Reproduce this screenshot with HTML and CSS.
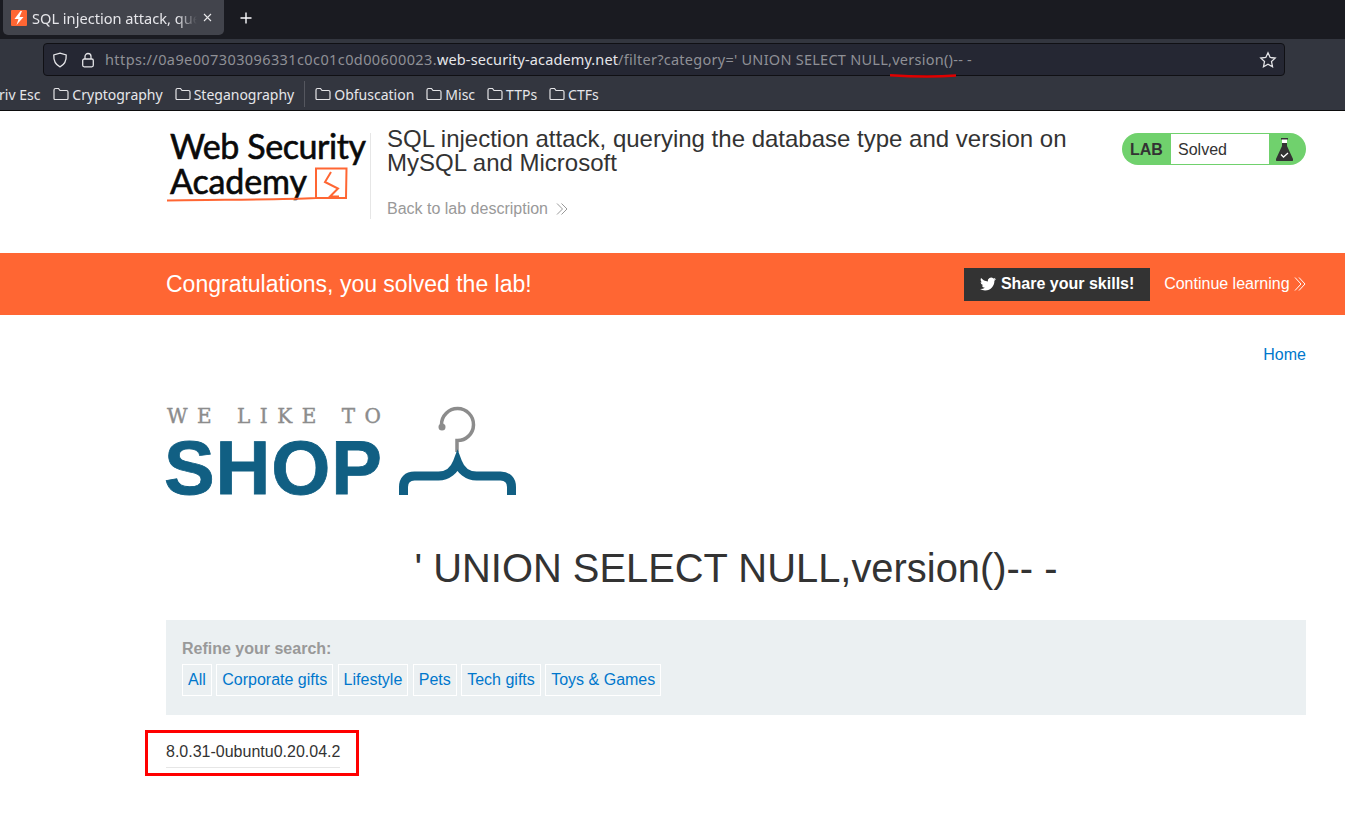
FILE: index.html
```html
<!DOCTYPE html>
<html lang="en">
<head>
  <meta charset="UTF-8">
  <title>SQL injection attack, querying the database type and version on MySQL and Microsoft</title>
  <link rel="stylesheet" href="styles.css">
</head>
<body>

  <div class="browser">
    <div class="tabbar">
      <div class="tab">
        <svg class="favicon" width="16" height="16" viewBox="0 0 16 16"><rect width="16" height="16" rx="1" fill="#ff6633"/><path d="M9.500 1 3.500 9h4L5.500 15l7-8H8.500L11 1z" fill="#fff"/></svg>
        <span class="tab-title">SQL injection attack, querying</span>
        <svg class="tab-close" width="9" height="9" viewBox="0 0 9 9"><path d="M1 1l7 7M8 1l-7 7" stroke="#e8e8ea" stroke-width="1.100"/></svg>
      </div>
      <svg class="newtab" width="14" height="14" viewBox="0 0 14 14"><path d="M7 1.500v11M1.500 7h11" stroke="#fbfbfe" stroke-width="1.400"/></svg>
    </div>

    <div class="navbar">
      <div class="urlbar">
        <svg width="16" height="16" viewBox="0 0 16 16" fill="none" stroke="#e4e4e7" stroke-width="1.300"><path d="M8 1.200 14.200 3c.3 5.500-1.600 9.600-6.200 11.800C3.400 12.600 1.500 8.500 1.800 3z"/></svg>
        <svg class="lock" width="16" height="16" viewBox="0 0 16 16" fill="none" stroke="#e4e4e7" stroke-width="1.300"><rect x="2.700" y="7" width="10.600" height="7.800" rx="1.500"/><path d="M5 7V4.500a3 3 0 0 1 6 0V7"/></svg>
        <span class="url"><span class="url-dim url-scheme">https://0a9e007303096331c0c01c0d00600023.</span><span class="url-host">web-security-academy.net</span><span class="url-dim url-path">/filter?category=' UNION SELECT NULL,version()-- -</span></span>
        <svg class="star" width="18" height="18" viewBox="0 0 18 18" fill="none" stroke="#e4e4e7" stroke-width="1.300"><path d="M9 1.800l2.200 4.700 5 .6-3.700 3.500 1 5.100L9 13.200l-4.500 2.500 1-5.100L1.800 7.100l5-.6z"/></svg>
      </div>
      <svg class="scribble" width="66" height="4" viewBox="0 0 66 4"><path d="M0 1.200C20 2.500 45 3 66 1.500" stroke="#e00000" stroke-width="2.400" fill="none"/></svg>
    </div>

    <div class="bookmarks">
      <span class="bookmark bookmark-cut">riv Esc</span>
      <span class="bookmark"><svg class="folder" width="16" height="14" viewBox="0 0 16 14"><path d="M1 3a1.500 1.500 0 0 1 1.500-1.500h3L7 3.500h6.500A1.500 1.500 0 0 1 15 5v6.500a1 1 0 0 1-1 1H2a1 1 0 0 1-1-1z"/></svg>Cryptography</span>
      <span class="bookmark"><svg class="folder" width="16" height="14" viewBox="0 0 16 14"><path d="M1 3a1.500 1.500 0 0 1 1.500-1.500h3L7 3.500h6.500A1.500 1.500 0 0 1 15 5v6.500a1 1 0 0 1-1 1H2a1 1 0 0 1-1-1z"/></svg>Steganography</span>
      <span class="bookmark-sep"></span>
      <span class="bookmark"><svg class="folder" width="16" height="14" viewBox="0 0 16 14"><path d="M1 3a1.500 1.500 0 0 1 1.500-1.500h3L7 3.500h6.500A1.500 1.500 0 0 1 15 5v6.500a1 1 0 0 1-1 1H2a1 1 0 0 1-1-1z"/></svg>Obfuscation</span>
      <span class="bookmark"><svg class="folder" width="16" height="14" viewBox="0 0 16 14"><path d="M1 3a1.500 1.500 0 0 1 1.500-1.500h3L7 3.500h6.500A1.500 1.500 0 0 1 15 5v6.500a1 1 0 0 1-1 1H2a1 1 0 0 1-1-1z"/></svg>Misc</span>
      <span class="bookmark"><svg class="folder" width="16" height="14" viewBox="0 0 16 14"><path d="M1 3a1.500 1.500 0 0 1 1.500-1.500h3L7 3.500h6.500A1.500 1.500 0 0 1 15 5v6.500a1 1 0 0 1-1 1H2a1 1 0 0 1-1-1z"/></svg>TTPs</span>
      <span class="bookmark"><svg class="folder" width="16" height="14" viewBox="0 0 16 14"><path d="M1 3a1.500 1.500 0 0 1 1.500-1.500h3L7 3.500h6.500A1.500 1.500 0 0 1 15 5v6.500a1 1 0 0 1-1 1H2a1 1 0 0 1-1-1z"/></svg>CTFs</span>
    </div>
  </div>

  <header class="lab-header">
    <svg class="academy-logo" width="204" height="80" viewBox="0 0 204 80">
      <text x="4" y="32" class="academy-text" textLength="196">Web Security</text>
      <text x="4" y="67" class="academy-text" textLength="137">Academy</text>
      <path d="M1 73.500C50 72.500 110 73 150 71V41.500h30.500L180 71h-30" fill="none" stroke="#ff6633" stroke-width="2"/>
      <path d="M165 45l-6 10 13 6.500-8 8h9" fill="none" stroke="#ff6633" stroke-width="2"/>
    </svg>
    <span class="title-rule"></span>
    <div class="lab-title">
      <h2>SQL injection attack, querying the database type and version on MySQL and Microsoft</h2>
      <a class="back-link">Back to lab description
        <svg width="12" height="12" viewBox="0 0 12 12" fill="none" stroke="#999" stroke-width="1"><path d="M1 .5 6.500 6 1 11.500M5.500 .5 11 6l-5.500 5.500"/></svg>
      </a>
    </div>
    <div class="lab-status">
      <span class="lab-word">LAB</span>
      <span class="lab-solved">Solved</span>
      <span class="lab-flask">
        <svg width="17" height="23" viewBox="0 0 17 23"><path d="M5 0h7v1.500h-1V8l6 13a1.500 1.500 0 0 1-1.300 2H1.300A1.500 1.500 0 0 1 0 21L6 8V1.500H5z" fill="#333"/><path d="M6 1.500h5V5H6z" fill="#fff"/><path d="M5 16.500l2.500 2.500 4.500-4" fill="none" stroke="#fff" stroke-width="1.300"/></svg>
      </span>
    </div>
  </header>

  <section class="solved-banner">
    <h4>Congratulations, you solved the lab!</h4>
    <a class="share-btn">
      <svg width="16" height="16" viewBox="0 0 24 24" fill="#fff"><path d="M23.953 4.570a10 10 0 01-2.825.775 4.958 4.958 0 002.163-2.723c-.951.555-2.005.959-3.127 1.184a4.920 4.920 0 00-8.384 4.482C7.690 8.095 4.067 6.130 1.640 3.162a4.822 4.822 0 00-.666 2.475c0 1.710.870 3.213 2.188 4.096a4.904 4.904 0 01-2.228-.616v.060a4.923 4.923 0 003.946 4.827 4.996 4.996 0 01-2.212.085 4.936 4.936 0 004.604 3.417 9.867 9.867 0 01-6.102 2.105c-.390 0-.779-.023-1.170-.067a13.995 13.995 0 007.557 2.209c9.053 0 13.998-7.496 13.998-13.985 0-.210 0-.420-.015-.630A9.935 9.935 0 0024 4.590z"/></svg>
      Share your skills!
    </a>
    <a class="continue-link">Continue learning
      <svg width="12" height="14" viewBox="0 0 12 14" fill="none" stroke="#fff" stroke-width="1"><path d="M1 .5 7 7l-6 6.500M5 .5 11 7l-6 6.500"/></svg>
    </a>
  </section>

  <main class="container">
    <nav class="top-links"><a>Home</a></nav>

    <svg class="shop-logo" width="352" height="92" viewBox="0 0 352 92">
      <text x="1" y="18" class="shop-small" textLength="214">WE LIKE TO</text>
      <text x="-2" y="89" class="shop-big" textLength="218">SHOP</text>
      <path d="M291 47V35.500a16 16 0 1 0-15.500-16" fill="none" stroke="#8c8c8c" stroke-width="3.500"/>
      <circle cx="276" cy="22" r="3.500" fill="#8c8c8c"/>
      <path d="M237.500 90V82c0-7 4-11 11-11h24c9 0 16-6 19-14 3 8 10 14 19 14h24c7 0 11 4 11 11v8" fill="none" stroke="#115f83" stroke-width="9"/>
    </svg>

    <h1 class="search-title">' UNION SELECT NULL,version()-- -</h1>

    <section class="filters">
      <p>Refine your search:</p>
      <div class="filter-links">
        <a>All</a>
        <a>Corporate gifts</a>
        <a>Lifestyle</a>
        <a>Pets</a>
        <a>Tech gifts</a>
        <a>Toys &amp; Games</a>
      </div>
    </section>

    <div class="results">
      <span class="result-row">8.0.31-0ubuntu0.20.04.2</span>
      <div class="red-box"></div>
    </div>
  </main>

</body>
</html>
```

FILE: styles.css
```css
* {
  box-sizing: border-box;
}

html, body {
  margin: 0;
  height: 828px;
  overflow: hidden;
}

body {
  background: white;
  color: #333;
  font-family: "Liberation Sans", Arial, sans-serif;
  font-size: 16px;
}

/* browser chrome */
.browser {
  height: 111px;
  background: #33363f;
  border-bottom: 1px solid #0c0c0d;
  color: #e6e6ea;
  font-family: "Noto Sans", sans-serif;
  font-size: 14px;
}

.tabbar {
  height: 39px;
  background: #1a1b21;
  display: flex;
  align-items: flex-start;
}

.tab {
  width: 221px;
  height: 35px;
  margin-left: 3px;
  padding: 0 8px;
  background: #42444c;
  border-radius: 0 0 5px 5px;
  display: flex;
  align-items: center;
  gap: 5px;
  font-size: 14.600px;
}

.favicon {
  flex: none;
}

.tab-title {
  flex: 1;
  overflow: hidden;
  white-space: nowrap;
  -webkit-mask-image: linear-gradient(to right, black 88%, transparent);
  mask-image: linear-gradient(to right, black 88%, transparent);
}

.tab-close {
  flex: none;
  margin: 0 4px 0 1px;
}

.newtab {
  margin: 11px 0 0 15px;
}

.navbar {
  height: 39px;
  padding: 4px 60px 0 43px;
  position: relative;
}

.urlbar {
  height: 33px;
  padding: 0 7px 0 8px;
  background: #252733;
  border: 1px solid #101014;
  border-radius: 4px;
  display: flex;
  align-items: center;
  font-size: 14.500px;
}

.lock {
  margin-left: 12px;
}

.url {
  margin: -2px 0 0 9px;
  flex: 1;
  white-space: nowrap;
}

.url-dim {
  color: #8f9096;
}

.url-scheme {
  letter-spacing: .4px;
}

.url-host {
  letter-spacing: .12px;
}

.url-path {
  letter-spacing: .26px;
}

.scribble {
  position: absolute;
  left: 890px;
  top: 35px;
}

.bookmarks {
  height: 32px;
  display: flex;
  align-items: center;
  overflow: hidden;
}

.bookmark {
  display: flex;
  align-items: center;
  gap: 3px;
  margin-right: 12px;
  white-space: nowrap;
}

.bookmark-cut {
  margin-left: -1px;
  margin-right: 13px;
}

.folder {
  fill: none;
  stroke: #e4e4e7;
  stroke-width: 1.200;
}

.bookmark-sep {
  width: 1px;
  height: 26px;
  margin: 0 10px 0 -2px;
  background: #55575f;
}

/* lab header */
.lab-header {
  height: 142px;
  padding: 16px 39px 0 166px;
  display: flex;
  align-items: flex-start;
}

.academy-logo {
  flex: none;
  overflow: visible;
}

.academy-text {
  font-family: Lato, sans-serif;
  font-size: 34px;
  fill: #0a0a0a;
  stroke: #0a0a0a;
  stroke-width: .6px;
}

.title-rule {
  flex: none;
  width: 1px;
  height: 86px;
  margin-top: 6px;
  background: #e6e6e6;
}

.lab-title {
  width: 751px;
  padding-left: 16px;
  flex: none;
}

.lab-title h2 {
  margin: 0;
  width: 700px;
  font-size: 24px;
  font-weight: normal;
  line-height: 24px;
  color: #333;
}

.back-link {
  display: block;
  margin-top: 25px;
  color: #999;
}

.back-link svg {
  margin-left: 4px;
  vertical-align: -1px;
}

.continue-link svg {
  vertical-align: -2px;
}

.lab-status {
  width: 184px;
  height: 32px;
  margin-top: 6px;
  background: #70d16d;
  border-radius: 16px;
  display: flex;
  align-items: stretch;
}

.lab-word {
  width: 49px;
  padding-left: 8px;
  font-weight: bold;
  line-height: 33px;
}

.lab-solved {
  width: 98px;
  margin: 1px 0;
  padding-left: 7px;
  background: white;
  line-height: 31px;
}

.lab-flask {
  padding: 5px 0 0 7px;
}

/* solved banner */
.solved-banner {
  height: 62px;
  padding: 0 39px 0 166px;
  background: #ff6633;
  color: white;
  display: flex;
  align-items: center;
}

.solved-banner h4 {
  margin: 0 auto 0 0;
  font-size: 23px;
  font-weight: normal;
}

.share-btn {
  width: 186px;
  height: 33px;
  background: #333;
  font-weight: bold;
  display: flex;
  align-items: center;
  justify-content: center;
  gap: 5px;
}

.continue-link {
  margin-left: 14px;
}

/* shop */
.container {
  width: 1140px;
  margin-left: 166px;
}

.top-links {
  padding-top: 31px;
  text-align: right;
  line-height: 18px;
}

.top-links a {
  color: #0077cc;
}

.shop-logo {
  display: block;
  margin-top: 41px;
  overflow: visible;
}

.shop-small {
  font-family: "DejaVu Serif", serif;
  font-size: 20px;
  fill: #8c8c8c;
  stroke: #8c8c8c;
  stroke-width: .4px;
}

.shop-big {
  font-family: "Liberation Sans", sans-serif;
  font-size: 76px;
  font-weight: bold;
  fill: #115f83;
  stroke: #115f83;
  stroke-width: .8px;
}

.search-title {
  margin: 48px 0 0;
  text-align: center;
  font-size: 39.900px;
  font-weight: normal;
  line-height: 46px;
}

.filters {
  height: 95px;
  margin-top: 29px;
  padding: 20px 15px 0 16px;
  background: #ebf0f2;
}

.filters p {
  margin: 0;
  color: #999;
  font-weight: bold;
  line-height: 18px;
}

.filter-links {
  margin-top: 6px;
  display: flex;
  gap: 4.450px;
}

.filter-links a {
  padding: 0 5px;
  height: 32px;
  line-height: 30px;
  border: 1px solid white;
  color: #0077cc;
}

.results {
  position: relative;
  margin-top: 28px;
}

.result-row {
  display: inline-block;
  height: 25px;
  line-height: 18px;
  border-bottom: 1px solid #e6e6e6;
}

.red-box {
  position: absolute;
  left: -21px;
  top: -13px;
  width: 214px;
  height: 46px;
  border: 3px solid #f00;
}
```
